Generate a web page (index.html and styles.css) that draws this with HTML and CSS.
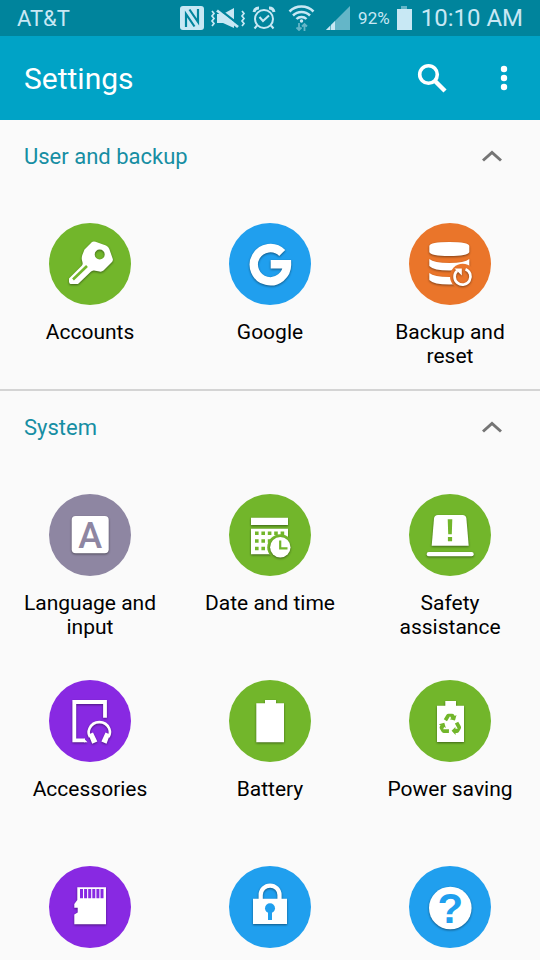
FILE: index.html
```html
<!DOCTYPE html>
<html lang="en">
<head>
<meta charset="utf-8">
<meta name="viewport" content="width=device-width, initial-scale=1">
<title>Settings</title>
<link rel="stylesheet" href="styles.css">
</head>
<body>
<div class="status">
  <span class="carrier">AT&amp;T</span>
  <div class="indicators">
    <svg width="24" height="24" viewBox="0 0 24 24" aria-hidden="true">
      <rect x="0" y="0" width="24" height="24" rx="3" fill="currentColor"/>
      <path d="M6 21V8L14.500 20.500M9.500 3.500L18 16V3" fill="none" stroke="#00849c" stroke-width="2.200"/>
    </svg>
    <svg width="36" height="24" viewBox="0 0 36 24" fill="none" stroke="currentColor" aria-hidden="true">
      <path d="M2 5l2 2.500L2 10l2 2.500L2 15l2 2.500L2 20M32 5l2 2.500L32 10l2 2.500L32 15l2 2.500L32 20" stroke-width="1.700"/>
      <path d="M7 8h6L24 2V22L13 17H7Z" fill="currentColor" stroke="none"/>
      <path d="M8 2.500L30 19.500" stroke="#00849c" stroke-width="2.400"/>
      <path d="M7 4.500L28 21" stroke-width="2.800"/>
    </svg>
    <svg width="24" height="24" viewBox="0 0 24 24" fill="none" stroke="currentColor" stroke-width="2" aria-hidden="true">
      <circle cx="12" cy="13" r="9"/>
      <path d="M2 6A5 5 0 0 1 7 2M22 6A5 5 0 0 0 17 2" stroke-width="3"/>
      <path d="M5 19.500L2.500 22.500M19 19.500L21.500 22.500M7.500 11L11 15L17 9.500"/>
    </svg>
    <svg width="38" height="26" viewBox="0 0 38 26" fill="none" stroke="currentColor" stroke-width="2.500" aria-hidden="true">
      <path d="M7.500 6.500A17 17 0 0 1 31.500 6.500M11 10.500A12 12 0 0 1 28 10.500M14.500 14A7 7 0 0 1 24.500 14"/>
      <circle cx="19.500" cy="16" r="1.700" fill="currentColor" stroke="none"/>
      <path d="M17 18V25M14.500 22.500L17 25L19.500 22.500M22.500 26V19M20 21.500L22.500 19L25 21.500" stroke-width="1.800" opacity=".5"/>
    </svg>
    <svg width="24" height="24" viewBox="0 0 24 24" fill="currentColor" aria-hidden="true">
      <path d="M0 24L24 0V24Z" opacity=".5"/>
      <path d="M0 24L4 20V24ZM5 24V19L9 15V24Z"/>
    </svg>
    <span class="percent">92%</span>
    <svg width="16" height="24" viewBox="0 0 16 24" fill="currentColor" aria-hidden="true">
      <path d="M5 0H11V3H5Z" opacity=".5"/><path d="M1 3H16V24H1Z"/>
    </svg>
  </div>
  <time class="clock">10:10 AM</time>
</div>

<header class="bar">
  <h1>Settings</h1>
  <button class="icon-button" type="button" aria-label="Search">
    <svg width="30" height="30" viewBox="0 0 30 30" fill="none" stroke="currentColor">
      <circle cx="11.500" cy="11.500" r="8.800" stroke-width="3.600"/><path d="M17.500 17.500L28 28" stroke-width="4.400"/>
    </svg>
  </button>
  <button class="icon-button" type="button" aria-label="More options">
    <svg width="8" height="26" viewBox="0 0 8 26" fill="currentColor">
      <circle cx="4" cy="4" r="3.200"/><circle cx="4" cy="13" r="3.200"/><circle cx="4" cy="22" r="3.200"/>
    </svg>
  </button>
</header>

<main>
  <section class="group">
    <h2><button class="group-head" type="button" aria-expanded="true">User and backup
      <svg width="22" height="14" viewBox="0 0 22 14" aria-hidden="true"><path d="M2 11.500L11 3.500L20 11.500"/></svg>
    </button></h2>
    <nav class="tiles">
      <a class="tile" href="#accounts">
        <svg class="disc green" viewBox="0 0 82 82" aria-hidden="true">
          <g class="art">
            <path fill-rule="evenodd" d="M43 19Q44.500 18 46.500 18.800L57 22.500Q59.500 23.500 60.300 26L63.800 36Q64.300 38 62.500 39.500L54.500 47.500Q52.800 49 50.500 48.500L45 47.500Q43 47.300 41.500 49L29 61H21.500Q20 60.500 20 58.500V55.500L33 42.500Q34 41 33.500 39.500L32.800 36.500Q32.500 34.500 33.300 32L35.500 26.500ZM50.700 26.500A5 5 0 1 0 50.700 36.500A5 5 0 1 0 50.700 26.500Z"/>
          </g>
          <path class="cut-line" d="M24 56.500L38 43" stroke-width="2.600"/>
        </svg>
        <span>Accounts</span>
      </a>
      <a class="tile" href="#google">
        <svg class="disc blue" viewBox="0 0 82 82" aria-hidden="true">
          <g class="art"><path class="line" stroke-width="8.400" d="M53.200 30A16.600 16.600 0 1 0 58 41.200H41.700"/></g>
        </svg>
        <span>Google</span>
      </a>
      <a class="tile" href="#backup">
        <svg class="disc orange" viewBox="0 0 82 82" aria-hidden="true">
          <g class="art"><path d="M20.300 23Q21 19 40.300 19T60.300 23V29Q59 33 40.300 33T20.300 29Z"/>
          <path d="M20.300 36Q25 40 40.300 40T60.300 36V43Q56 47.500 40.300 47.500T20.300 43Z"/>
          <path d="M20.300 50Q25 54 40.300 54T60.300 50V57Q56 61.500 40.300 61.500T20.300 57Z"/></g>
          <circle class="cut" cx="53.700" cy="53.500" r="12.700"/>
          <g class="art"><path class="line" stroke-width="2.700" d="M56.500 46.200A8 8 0 1 1 48.200 47.700"/><path d="M45.500 45.500H52.800V52.500Z"/></g>
        </svg>
        <span>Backup and reset</span>
      </a>
    </nav>
  </section>

  <section class="group">
    <h2><button class="group-head" type="button" aria-expanded="true">System
      <svg width="22" height="14" viewBox="0 0 22 14" aria-hidden="true"><path d="M2 11.500L11 3.500L20 11.500"/></svg>
    </button></h2>
    <nav class="tiles">
      <a class="tile" href="#language">
        <svg class="disc mauve" viewBox="0 0 82 82" aria-hidden="true">
          <g class="art"><rect x="22.700" y="22" width="37" height="37.300" rx="4"/></g>
          <text class="letter" x="41.200" y="53.500">A</text>
        </svg>
        <span>Language and input</span>
      </a>
      <a class="tile" href="#date">
        <svg class="disc green" viewBox="0 0 82 82" aria-hidden="true">
          <g class="art"><path d="M22 23.700H59V31H22ZM22 34.700H59V60.300H22Z"/></g>
          <path class="cut-line" stroke-width="3.600" stroke-dasharray="3.600 2.800" d="M26 39.200H56M26 47H46M26 54.500H40"/>
          <circle class="cut" cx="51.300" cy="53.300" r="13"/>
          <g class="art"><circle cx="51.300" cy="53.300" r="10.200"/></g>
          <path class="cut-line" stroke-width="2.200" d="M51.200 46.500V54.300H58.500"/>
        </svg>
        <span>Date and time</span>
      </a>
      <a class="tile" href="#safety">
        <svg class="disc green" viewBox="0 0 82 82" aria-hidden="true">
          <g class="art"><path d="M25 24.500Q25.400 21 29 21H53.500Q57 21 57.400 24.500L59.700 51.700H22.700Z"/><rect x="17.700" y="58" width="47" height="4.200" rx="2"/></g>
          <path class="cut" d="M38.700 25.300H43.300L42.800 40.200H39.200ZM38.900 43H43.100V47.300H38.900Z"/>
        </svg>
        <span>Safety assistance</span>
      </a>
      <a class="tile" href="#accessories">
        <svg class="disc purple" viewBox="0 0 82 82" aria-hidden="true">
          <g class="art"><path class="line" stroke-width="3.800" d="M56 37.700V22H25.300V60.400H36"/><path d="M35 58.500L38.500 62.300H35Z"/>
          <path class="line" stroke-width="2.600" d="M41 57Q38.500 53 40.500 48.500A10.800 10.800 0 0 1 60.200 48.500Q62 53 59.500 57"/>
          <path d="M39.500 54.500L44 52.600L48.300 61.500L43.200 63.700ZM61 54.500L56.500 52.600L52.400 61.500L57.500 63.700Z"/></g>
        </svg>
        <span>Accessories</span>
      </a>
      <a class="tile" href="#battery">
        <svg class="disc green" viewBox="0 0 82 82" aria-hidden="true">
          <g class="art"><path d="M27.300 23.300H36V20H47V23.300H55V62.300H27.300Z"/></g>
        </svg>
        <span>Battery</span>
      </a>
      <a class="tile" href="#power">
        <svg class="disc green" viewBox="0 0 82 82" aria-hidden="true">
          <g class="art"><path d="M28 25.700H36.300V21H47V25.700H55V62H28Z"/></g>
          <g id="arrow"><path class="cut" d="M34.800 39.300L37.500 34.800Q38.200 33.700 39.500 33.700H43Q44.500 33.700 45.200 35L45.800 36L47.500 35L46 40.500L40.700 39.200L42.300 38.200L41 36.300L38 41.300Z"/></g>
          <use href="#arrow" transform="rotate(120 41.300 44.700)"/>
          <use href="#arrow" transform="rotate(240 41.300 44.700)"/>
        </svg>
        <span>Power saving</span>
      </a>
      <a class="tile" href="#storage" aria-label="Storage">
        <svg class="disc purple" viewBox="0 0 82 82" aria-hidden="true">
          <g class="art"><path d="M28.300 21.300H57V58.300H25.300V48.500L28.700 46.500V41.800H25.300V38L28.300 34Z"/></g>
          <path class="cut-line" stroke-width="9.300" stroke-dasharray="3 1.100" d="M31 27.700H54.500"/>
        </svg>
      </a>
      <a class="tile" href="#security" aria-label="Security">
        <svg class="disc blue" viewBox="0 0 82 82" aria-hidden="true">
          <g class="art"><path d="M24 32.700H58V58H24Z"/><path class="line" stroke-width="4.200" d="M31.700 34V29A9.400 9.400 0 0 1 50.500 29V34"/></g>
          <circle class="cut" cx="41" cy="42.300" r="5"/><path class="cut" d="M39 44H43V54H39Z"/>
        </svg>
      </a>
      <a class="tile" href="#help" aria-label="Help">
        <svg class="disc blue" viewBox="0 0 82 82" aria-hidden="true">
          <g class="art"><circle cx="41.300" cy="42" r="21.300"/></g>
          <text class="mark" x="41.300" y="57">?</text>
        </svg>
      </a>
    </nav>
  </section>
</main>
</body>
</html>
```
FILE: styles.css
```css
* {
  box-sizing: border-box;
}

body {
  margin: 0;
  background: #fafafa;
  color: #000;
  font-family: Roboto, "Liberation Sans", sans-serif;
}

svg {
  display: block;
  flex: none;
}

.status {
  display: flex;
  align-items: center;
  height: 36px;
  padding: 0 17px;
  background: #00849c;
  color: #c8e8f4;
}

.carrier {
  font-size: 22px;
}

.indicators {
  display: flex;
  align-items: center;
  gap: 6px;
  margin-left: auto;
  margin-right: 9px;
}

.percent {
  margin-left: 2px;
  font-size: 17px;
}

.clock {
  font-size: 24px;
}

.bar {
  display: flex;
  align-items: center;
  height: 84px;
  padding: 0 12px 0 24px;
  background: #00a3c6;
  color: #fff;
}

h1 {
  flex: 1;
  margin: 0;
  font-size: 30px;
  font-weight: 400;
}

.icon-button {
  display: grid;
  place-items: center;
  width: 48px;
  height: 48px;
  margin-left: 24px;
  padding: 0;
  border: 0;
  background: none;
  color: inherit;
}

.group + .group {
  border-top: 2px solid #d4d4d4;
}

h2 {
  margin: 0;
}

.group-head {
  display: flex;
  align-items: center;
  justify-content: space-between;
  width: 100%;
  height: 72px;
  padding: 0 37px 0 24px;
  border: 0;
  background: none;
  color: #168ea3;
  font: 400 22px Roboto, "Liberation Sans", sans-serif;
}

.group-head path {
  fill: none;
  stroke: #757575;
  stroke-width: 3;
}

.tiles {
  display: grid;
  grid-template-columns: repeat(3, 1fr);
  row-gap: 41px;
  padding: 31px 0 21px;
}

.group + .group .tiles {
  padding-bottom: 12px;
}

.tile {
  display: flex;
  flex-direction: column;
  align-items: center;
  gap: 15px;
  color: inherit;
  text-align: center;
  text-decoration: none;
}

.tile span {
  min-height: 48px;
  padding: 0 12px;
  font-size: 21px;
  line-height: 24px;
}

.disc {
  width: 82px;
  height: 82px;
  border-radius: 50%;
  background: var(--tint);
}

.green { --tint: #72b62b; }
.blue { --tint: #209fee; }
.orange { --tint: #ea752a; }
.mauve { --tint: #8e86a2; }
.purple { --tint: #8829e2; }

.art {
  fill: #fff;
  filter: drop-shadow(0 1px 1px rgba(0, 0, 0, 0.45));
}

.line {
  fill: none;
  stroke: #fff;
}

.cut {
  fill: var(--tint);
}

.cut-line {
  fill: none;
  stroke: var(--tint);
}

.letter,
.mark {
  fill: var(--tint);
  text-anchor: middle;
}

.letter {
  font-size: 36px;
  font-weight: 500;
}

.mark {
  font-family: "Liberation Sans", sans-serif;
  font-size: 42px;
  font-weight: 700;
}
```
